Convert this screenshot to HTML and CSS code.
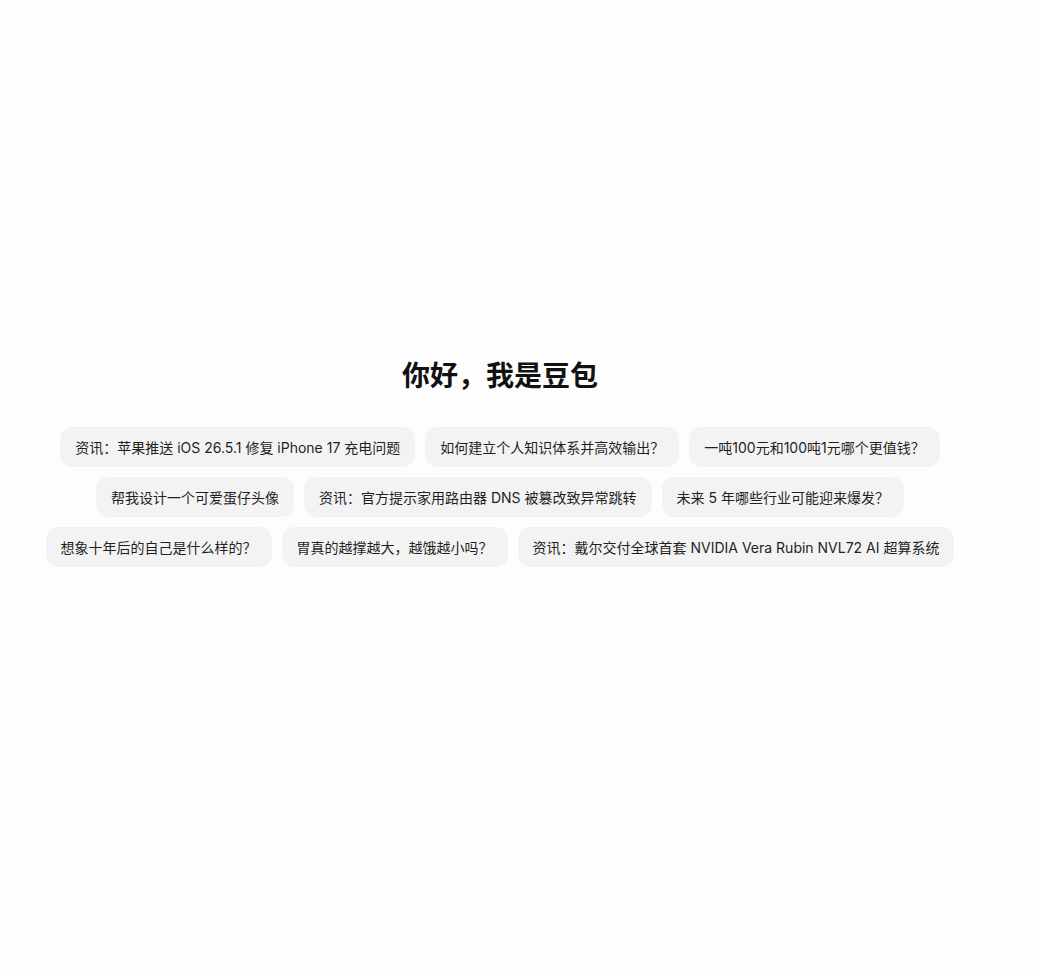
FILE: index.html
```html
<!DOCTYPE html>
<html lang="zh-CN">
<head>
<meta charset="utf-8">
<title>豆包</title>
<link rel="stylesheet" href="styles.css">
</head>
<body>
<main class="home">
  <h1 class="title">你好，我是豆包</h1>
  <div class="suggestions">
    <div class="row">
      <button class="chip">资讯：苹果推送 iOS 26.5.1 修复 iPhone 17 充电问题</button>
      <button class="chip">如何建立个人知识体系并高效输出？</button>
      <button class="chip">一吨100元和100吨1元哪个更值钱？</button>
    </div>
    <div class="row">
      <button class="chip">帮我设计一个可爱蛋仔头像</button>
      <button class="chip">资讯：官方提示家用路由器 DNS 被篡改致异常跳转</button>
      <button class="chip">未来 5 年哪些行业可能迎来爆发？</button>
    </div>
    <div class="row">
      <button class="chip">想象十年后的自己是什么样的？</button>
      <button class="chip">胃真的越撑越大，越饿越小吗？</button>
      <button class="chip">资讯：戴尔交付全球首套 NVIDIA Vera Rubin NVL72 AI 超算系统</button>
    </div>
  </div>
</main>
</body>
</html>
```

FILE: styles.css
```css
html, body {
  margin: 0;
  padding: 0;
  background: #fdfdfd;
  height: 100%;
}

body {
  font-family: Inter, "Noto Sans CJK SC", sans-serif;
  color: #1f1f1f;
}

.home {
  width: 1000px;
  padding-top: 354px;
  display: flex;
  flex-direction: column;
  align-items: center;
}

.title {
  margin: 0;
  font-size: 28px;
  line-height: 40px;
  font-weight: 700;
  color: #111;
  font-family: "Noto Sans CJK SC", sans-serif;
}

.suggestions {
  margin-top: 33px;
  display: flex;
  flex-direction: column;
  gap: 10px;
  align-items: center;
}

.row {
  display: flex;
  gap: 10px;
  justify-content: center;
}

.chip {
  height: 40px;
  padding: 0 15px;
  border: none;
  border-radius: 12px;
  background: #f3f3f3;
  box-shadow: 0 0 6px rgba(255, 255, 255, 0.9);
  font-family: Inter, "Noto Sans CJK SC", sans-serif;
  font-size: 14px;
  color: #1f1f1f;
  white-space: nowrap;
  cursor: pointer;
}
```
